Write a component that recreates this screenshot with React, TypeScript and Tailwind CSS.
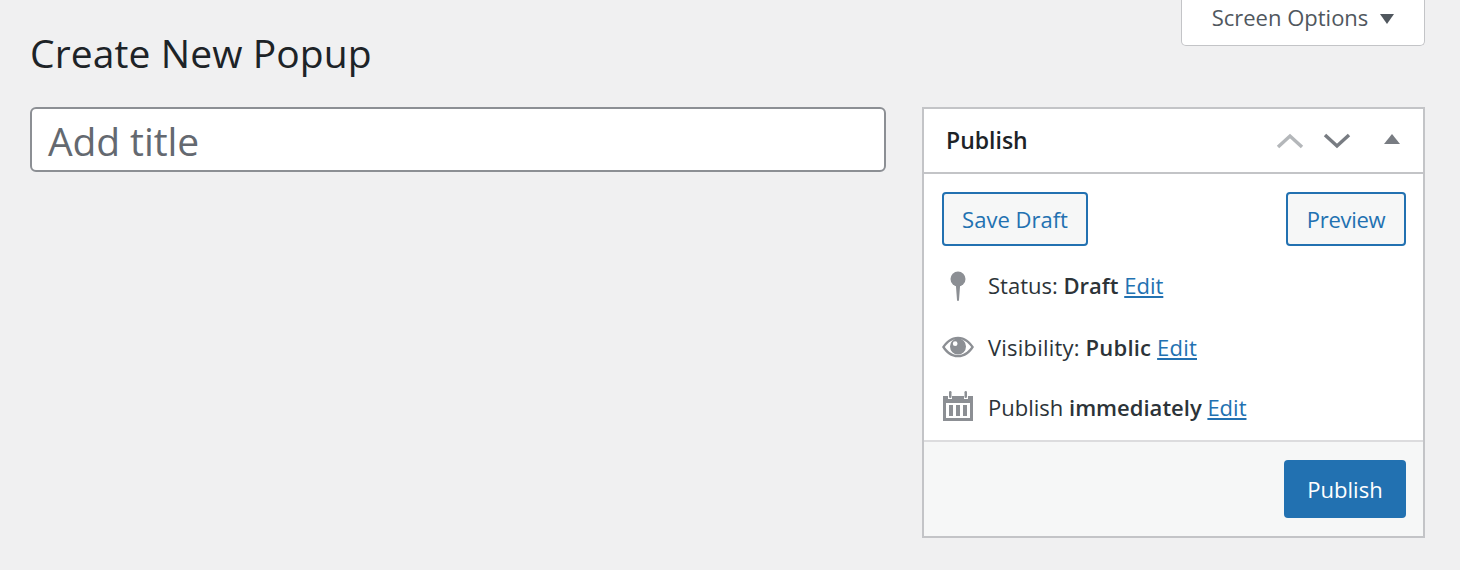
const EditLink = () => (
  <a href="#" className="text-[#2271b1] underline">
    Edit
  </a>
);

const PinIcon = () => (
  <svg width="20" height="32" viewBox="0 0 20 32" className="mt-[3px] text-[#8c8f94]" fill="currentColor">
    <circle cx="10" cy="8" r="7.500" />
    <path d="M7.800 13h4.400l-1.200 16a1 1 0 0 1-2 0z" />
  </svg>
);

const EyeIcon = () => (
  <svg width="34" height="24" viewBox="0 0 34 24" className="text-[#8c8f94]" fill="currentColor">
    <path
      fillRule="evenodd"
      d="M17 1C9.500 1 4 5.500 0 12c4 6.500 9.500 11 17 11s13-4.500 17-11C30 5.500 24.500 1 17 1zM17 3.500C11.500 3.500 6.800 6.800 3 12c3.800 5.200 8.500 8.500 14 8.500S27.200 17.200 31 12C27.200 6.800 22.500 3.500 17 3.500z"
    />
    <path
      fillRule="evenodd"
      d="M17 3a8.500 8.500 0 1 0 0 17 8.500 8.500 0 0 0 0-17zM14 6a2.500 2.500 0 1 0 0 5 2.500 2.500 0 0 0 0-5z"
    />
  </svg>
);

const CalendarIcon = () => (
  <svg width="30" height="30" viewBox="0 0 30 30" className="-mt-[2px] text-[#8c8f94]" fill="currentColor">
    <path fillRule="evenodd" d="M0 5h5v3h4V5h12v3h4V5h5v25H0zM3 12v15h24V12z" />
    <rect x="6" y="0" width="2.500" height="7" rx="1.200" />
    <rect x="21.500" y="0" width="2.500" height="7" rx="1.200" />
    <rect x="6" y="14" width="4" height="11" />
    <rect x="13" y="14" width="4" height="11" />
    <rect x="20" y="14" width="4" height="11" />
  </svg>
);

export default function App() {
  return (
    <div className="min-h-screen bg-[#f0f0f1] pl-[30px] pr-[35px] font-['Open_Sans',sans-serif] text-[#2c3338]">
      {/* top row */}
      <div className="flex h-[107px] items-start justify-between">
        <h1 className="mt-[28px] text-[39px] leading-[50px] font-normal tracking-[0.1px] text-[#1d2327]">
          Create New Popup
        </h1>
        <button className="flex h-[46px] w-[244px] items-center justify-center gap-[12px] rounded-b-[5px] border border-t-0 border-[#c3c4c7] bg-white pb-[10px] text-[22px] text-[#50575e]">
          Screen Options
          <span className="mt-[2px] h-0 w-0 border-x-[7px] border-t-[10px] border-x-transparent border-t-[#50575e]" />
        </button>
      </div>

      <div className="flex items-start gap-[36px]">
        {/* title field */}
        <div className="flex h-[65px] w-[856px] items-center rounded-[6px] border-2 border-[#8c8f94] bg-white pl-[16px] pt-[4px] text-[39px] tracking-[-0.1px] text-[#646970]">
          Add title
        </div>

        {/* publish box */}
        <div className="w-[503px] border-2 border-[#c3c4c7] bg-white">
          <div className="flex h-[65px] items-center justify-between border-b-2 border-[#c3c4c7] pl-[22px] pr-[23px]">
            <span className="text-[23px] font-semibold text-[#1d2327]">Publish</span>
            <div className="flex items-center">
              <svg width="28" height="16" viewBox="0 0 28 16" fill="none" stroke="#b4b7ba" strokeWidth="3.500">
                <path d="M2 14 14 3l12 11" />
              </svg>
              <svg width="28" height="16" viewBox="0 0 28 16" fill="none" stroke="#787c82" strokeWidth="3.500" className="ml-[19px]">
                <path d="M2 2l12 11L26 2" />
              </svg>
              <span className="ml-[33px] mb-[4px] h-0 w-0 border-x-[8px] border-b-[10px] border-x-transparent border-b-[#787c82]" />
            </div>
          </div>

          <div className="pl-[18px] pr-[17px] pt-[18px] pb-[15px]">
            <div className="flex justify-between">
              <button className="h-[54px] w-[146px] rounded-[4px] border-2 border-[#2271b1] bg-[#f6f7f7] text-[22px] text-[#2271b1]">
                Save Draft
              </button>
              <button className="h-[54px] w-[120px] rounded-[4px] border-2 border-[#2271b1] bg-[#f6f7f7] text-[22px] tracking-[-0.3px] text-[#2271b1]">
                Preview
              </button>
            </div>

            <div className="mt-[21px] flex h-[36px] items-center text-[22px]">
              <span className="flex w-[46px] justify-center pr-[14px]"><PinIcon /></span>
              <span>
                Status: <b className="font-semibold">Draft</b> <EditLink />
              </span>
            </div>
            <div className="mt-[26px] flex h-[36px] items-center text-[22px]">
              <span className="flex w-[46px] justify-center pr-[14px]"><EyeIcon /></span>
              <span className="tracking-[0.2px]">
                Visibility: <b className="font-semibold">Public</b> <EditLink />
              </span>
            </div>
            <div className="mt-[24px] flex h-[36px] items-center text-[22px]">
              <span className="flex w-[46px] justify-center pr-[14px]"><CalendarIcon /></span>
              <span>
                Publish <b className="font-semibold">immediately</b> <EditLink />
              </span>
            </div>
          </div>

          <div className="flex h-[96px] items-start justify-end border-t-2 border-[#dcdcde] bg-[#f6f7f7] pt-[18px] pr-[17px]">
            <button className="h-[58px] w-[122px] rounded-[4px] bg-[#2271b1] text-[22px] text-white">
              Publish
            </button>
          </div>
        </div>
      </div>
    </div>
  );
}
